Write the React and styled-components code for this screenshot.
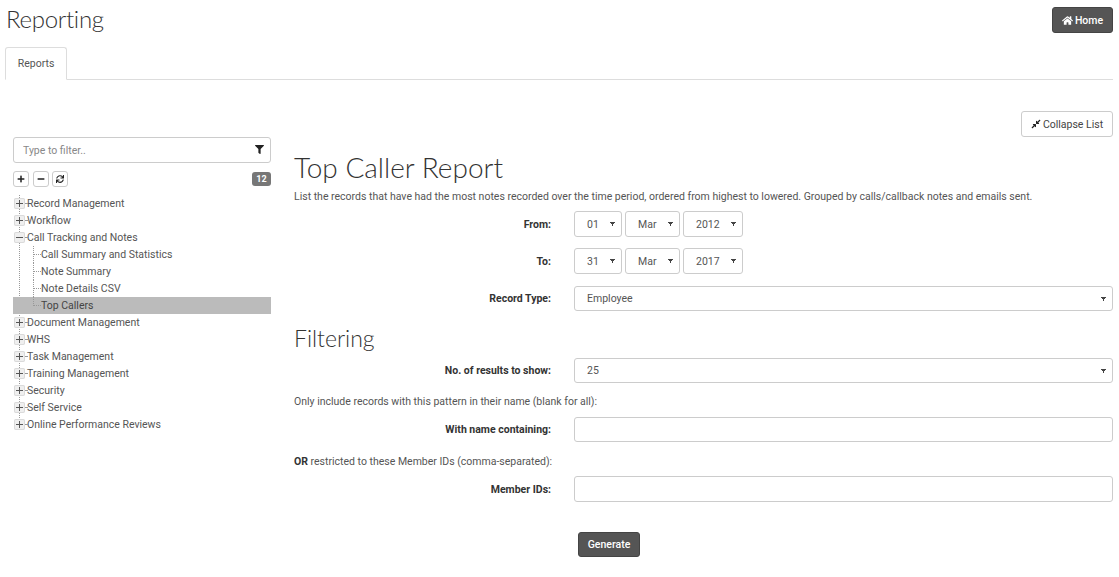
import React from "react";
import styled, { createGlobalStyle } from "styled-components";
import { FaHome, FaFilter, FaPlus, FaMinus, FaSync, FaCompressAlt } from "react-icons/fa";

const Global = createGlobalStyle`
  html, body { margin: 0; padding: 0; background: #fff; }
  body { font-family: Roboto, "Liberation Sans", sans-serif; font-size: 10.5px; color: #555; }
  * { box-sizing: border-box; }
`;

const Page = styled.div`
  width: 1119px;
  height: 577px;
  overflow: hidden;
  padding: 0 6px 0 5px;
`;
const Header = styled.header`
  display: flex;
  justify-content: space-between;
  align-items: flex-start;
  height: 47px;
  padding-top: 7px;
`;
const PageTitle = styled.h1`
  margin: 0;
  padding-left: 1px;
  font: 300 24px/24px Lato, sans-serif;
  letter-spacing: -0.3px;
  color: #333;
`;
const DarkButton = styled.button`
  display: inline-flex;
  align-items: center;
  justify-content: center;
  gap: 2px;
  height: ${(p) => p.$h || 26}px;
  width: ${(p) => p.$w}px;
  padding: 0;
  border: 1px solid #444;
  border-radius: 3px;
  background: #555;
  color: #fff;
  font: 500 10.5px Roboto, sans-serif;
  svg { width: 11px; height: 11px; }
`;
const Tabs = styled.nav`
  display: flex;
  height: 33px;
  border-bottom: 1px solid #ddd;
`;
const Tab = styled.div`
  width: 62px;
  height: 33px;
  border: 1px solid #ddd;
  border-bottom-color: #fff;
  border-radius: 3px 3px 0 0;
  background: #fff;
  display: flex;
  align-items: center;
  justify-content: center;
  color: #555;
  font-size: 10.5px;
  font-weight: 400;
`;
const Toolbar = styled.div`
  display: flex;
  justify-content: flex-end;
  padding-top: 31px;
  height: 58px;
`;
const LightButton = styled.button`
  display: inline-flex;
  align-items: center;
  justify-content: center;
  gap: 2px;
  width: 92px;
  height: 26px;
  padding: 0;
  border: 1px solid #ccc;
  border-radius: 3px;
  background: #fff;
  color: #444;
  font: 400 10.5px Roboto, sans-serif;
  svg { width: 10px; height: 10px; color: #222; }
`;
const Columns = styled.div`
  display: flex;
  align-items: flex-start;
  gap: 23px;
  padding-left: 8px;
`;
const Sidebar = styled.aside`
  width: 258px;
  flex: none;
  margin-top: -1px;
`;
const FilterBox = styled.div`
  position: relative;
  height: 26px;
`;
const FilterInput = styled.input`
  width: 100%;
  height: 26px;
  padding: 0 28px 0 9px;
  border: 1px solid #ccc;
  border-radius: 3px;
  font: 400 10.5px Roboto, sans-serif;
  color: #555;
  &::placeholder { color: #888; opacity: 1; }
`;
const FilterIcon = styled(FaFilter)`
  position: absolute;
  right: 7px;
  top: 8px;
  width: 9px;
  height: 9px;
  color: #222;
`;
const TreeBar = styled.div`
  display: flex;
  align-items: center;
  justify-content: space-between;
  margin-top: 8px;
  height: 16px;
`;
const TreeButtons = styled.div`
  display: flex;
  gap: 3.5px;
`;
const TreeButton = styled.button`
  display: flex;
  align-items: center;
  justify-content: center;
  width: 16px;
  height: 16px;
  padding: 0;
  border: 1px solid #ccc;
  border-radius: 3px;
  background: #fff;
  color: #222;
  svg { width: 8px; height: 8px; }
`;
const Badge = styled.span`
  width: 19px;
  height: 14px;
  border-radius: 3px;
  background: #777;
  color: #fff;
  font-size: 9px;
  font-weight: 700;
  line-height: 14px;
  text-align: center;
`;
const Tree = styled.ul`
  position: relative;
  list-style: none;
  margin: 8px 0 0;
  padding: 0;
  &::before {
    content: "";
    position: absolute;
    left: 6px;
    top: 0;
    height: 229px;
    border-left: 1px dotted #999;
  }
`;
const Row = styled.li`
  position: relative;
  display: flex;
  align-items: center;
  height: 17px;
  padding-left: ${(p) => (p.$child ? 28 : 14)}px;
  background: ${(p) => (p.$active ? "#bbb" : "transparent")};
  color: ${(p) => (p.$active ? "#444" : "#555")};
  font-size: 10.5px;
  line-height: 17px;
  &::before {
    content: "";
    position: absolute;
    left: ${(p) => (p.$child ? 20 : 12)}px;
    width: ${(p) => (p.$child ? 8 : 2)}px;
    top: 8px;
    border-top: 1px dotted #999;
  }
  ${(p) =>
    p.$child &&
    `&::after {
      content: "";
      position: absolute;
      left: 20px;
      top: 0;
      height: ${p.$last ? 9 : 17}px;
      border-left: 1px dotted #999;
    }`}
`;
const Toggle = styled.span`
  position: absolute;
  z-index: 1;
  left: 1px;
  top: 3px;
  width: 11px;
  height: 11px;
  background: #efefef;
  box-shadow: inset 0 0 0 1px #dadada;
  border-radius: 2px;
  &::before {
    content: "";
    position: absolute;
    left: 2px;
    right: 2px;
    top: 5px;
    height: 1px;
    background: #555;
  }
  ${(p) =>
    !p.$open &&
    `&::after {
      content: "";
      position: absolute;
      top: 2px;
      bottom: 2px;
      left: 5px;
      width: 1px;
      background: #555;
    }`}
`;
const Main = styled.main`
  flex: 1;
  min-width: 0;
`;
const Title = styled.h2`
  margin: 0;
  font: 300 28px/34px Lato, sans-serif;
  color: #333;
  padding-top: 12px;
`;
const Lead = styled.p`
  margin: 5px 0 0;
  font-size: 10.5px;
  line-height: 16px;
  color: #555;
  white-space: nowrap;
`;
const FormRow = styled.div`
  display: grid;
  grid-template-columns: 257px 1fr;
  column-gap: 23px;
  align-items: center;
  height: ${(p) => p.$h || 25}px;
  margin-top: ${(p) => p.$mt || 0}px;
`;
const Label = styled.label`
  text-align: right;
  font-weight: 700;
  font-size: 10.5px;
  color: #333;
`;
const Controls = styled.div`
  display: flex;
  gap: 3px;
`;
const Select = styled.select`
  appearance: none;
  width: ${(p) => (p.$w ? `${p.$w}px` : "100%")};
  height: ${(p) => p.$h || 25}px;
  padding: 0 12px;
  border: 1px solid #ccc;
  border-radius: 3px;
  background-color: #fff;
  background-image: conic-gradient(from -32deg at 50% 100%, #444 64deg, transparent 0);
  background-size: 5px 4px;
  background-repeat: no-repeat;
  background-position: right 6px center;
  color: #555;
  font: 400 10.5px Roboto, sans-serif;
`;
const TextField = styled.input`
  width: 100%;
  height: 100%;
  border: 1px solid #ccc;
  border-radius: 3px;
  background: #fff;
`;
const SubTitle = styled.h3`
  margin: 12px 0 0;
  font: 300 23px/30px Lato, sans-serif;
  color: #333;
`;
const Hint = styled.p`
  margin: ${(p) => p.$mt}px 0 0;
  font-size: 10.5px;
  line-height: 16px;
  color: #555;
  b { color: #333; }
`;
const Actions = styled.div`
  padding: 30px 0 0 284px;
`;

const Dropdown = ({ value, w, h }) => (
  <Select $w={w} $h={h} defaultValue={value}>
    <option>{value}</option>
  </Select>
);

const top = ["Record Management", "Workflow"];
const rest = ["Document Management", "WHS", "Task Management", "Training Management", "Security", "Self Service", "Online Performance Reviews"];
const kids = ["Call Summary and Statistics", "Note Summary", "Note Details CSV", "Top Callers"];

export default function App() {
  return (
    <Page>
      <Global />
      <Header>
        <PageTitle>Reporting</PageTitle>
        <DarkButton $w={61}><FaHome />Home</DarkButton>
      </Header>
      <Tabs><Tab>Reports</Tab></Tabs>
      <Toolbar>
        <LightButton><FaCompressAlt />Collapse List</LightButton>
      </Toolbar>
      <Columns>
        <Sidebar>
          <FilterBox>
            <FilterInput placeholder="Type to filter.." />
            <FilterIcon />
          </FilterBox>
          <TreeBar>
            <TreeButtons>
              <TreeButton><FaPlus /></TreeButton>
              <TreeButton><FaMinus /></TreeButton>
              <TreeButton><FaSync /></TreeButton>
            </TreeButtons>
            <Badge>12</Badge>
          </TreeBar>
          <Tree>
            {top.map((t) => <Row key={t}><Toggle />{t}</Row>)}
            <Row><Toggle $open />Call Tracking and Notes</Row>
            {kids.map((t, i) => (
              <Row key={t} $child $last={i === 3} $active={i === 3}>{t}</Row>
            ))}
            {rest.map((t) => <Row key={t}><Toggle />{t}</Row>)}
          </Tree>
        </Sidebar>
        <Main>
          <Title>Top Caller Report</Title>
          <Lead>List the records that have had the most notes recorded over the time period, ordered from highest to lowered. Grouped by calls/callback notes and emails sent.</Lead>
          <FormRow $mt={6} $h={26}>
            <Label>From:</Label>
            <Controls><Dropdown value="01" w={48} h={26} /><Dropdown value="Mar" w={55} h={26} /><Dropdown value="2012" w={60} h={26} /></Controls>
          </FormRow>
          <FormRow $mt={11} $h={26}>
            <Label>To:</Label>
            <Controls><Dropdown value="31" w={48} h={26} /><Dropdown value="Mar" w={55} h={26} /><Dropdown value="2017" w={60} h={26} /></Controls>
          </FormRow>
          <FormRow $mt={12}>
            <Label>Record Type:</Label>
            <Dropdown value="Employee" />
          </FormRow>
          <SubTitle>Filtering</SubTitle>
          <FormRow $mt={5}>
            <Label>No. of results to show:</Label>
            <Dropdown value="25" />
          </FormRow>
          <Hint $mt={11}>Only include records with this pattern in their name (blank for all):</Hint>
          <FormRow $mt={7}>
            <Label>With name containing:</Label>
            <TextField />
          </FormRow>
          <Hint $mt={12}><b>OR</b> restricted to these Member IDs (comma-separated):</Hint>
          <FormRow $mt={6} $h={26}>
            <Label>Member IDs:</Label>
            <TextField />
          </FormRow>
          <Actions><DarkButton $w={62} $h={25}>Generate</DarkButton></Actions>
        </Main>
      </Columns>
    </Page>
  );
}
